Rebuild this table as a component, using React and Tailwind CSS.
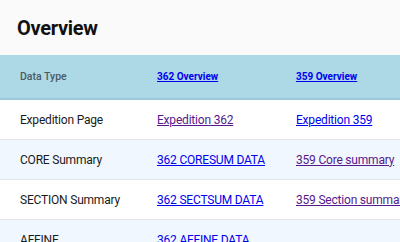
const rows = [
  { label: 'Expedition Page', a: { text: 'Expedition 362', visited: true }, b: { text: 'Expedition 359' } },
  { label: 'CORE Summary', a: { text: '362 CORESUM DATA' }, b: { text: '359 Core summary', visited: true } },
  { label: 'SECTION Summary', a: { text: '362 SECTSUM DATA' }, b: { text: '359 Section summary', visited: true } },
  { label: 'AFFINE', a: { text: '362 AFFINE DATA' }, b: null },
];

const Cell = ({ link }) =>
  link ? (
    <a href="#" className={`underline whitespace-nowrap ${link.visited ? 'text-[#551a8b]' : 'text-[#0000ee]'}`}>
      {link.text}
    </a>
  ) : (
    <span />
  );

export default function App() {
  return (
    <div className="w-[400px] h-[242px] overflow-hidden bg-white" style={{ fontFamily: 'Roboto, "Liberation Sans", sans-serif' }}>
      <header className="h-[55px] bg-[#fafafa] flex items-center px-[17px]">
        <h1 className="text-[20px] font-bold text-[#111] tracking-[-0.3px]">Overview</h1>
      </header>
      <div className="grid grid-cols-[137px_139px_1fr] h-[45px] items-center pl-5 bg-[#add8e6] border-b-2 border-[#9ccadb]">
        <span className="text-[10.5px] font-medium text-[#4a5a62]">Data Type</span>
        <a href="#" className="text-[10px] font-bold text-[#0000ee] underline">362 Overview</a>
        <a href="#" className="text-[10px] font-bold text-[#0000ee] underline">359 Overview</a>
      </div>
      {rows.map((row, i) => (
        <div
          key={row.label}
          className={`grid grid-cols-[137px_139px_1fr] h-10 items-center pl-5 text-[12px] tracking-[-0.2px] border-b border-[#e3e6e8] overflow-hidden ${i % 2 ? 'bg-[#f0f7fe]' : 'bg-white'}`}
        >
          <span className="text-[#1a1a1a] whitespace-nowrap">{row.label}</span>
          <Cell link={row.a} />
          <Cell link={row.b} />
        </div>
      ))}
    </div>
  );
}
